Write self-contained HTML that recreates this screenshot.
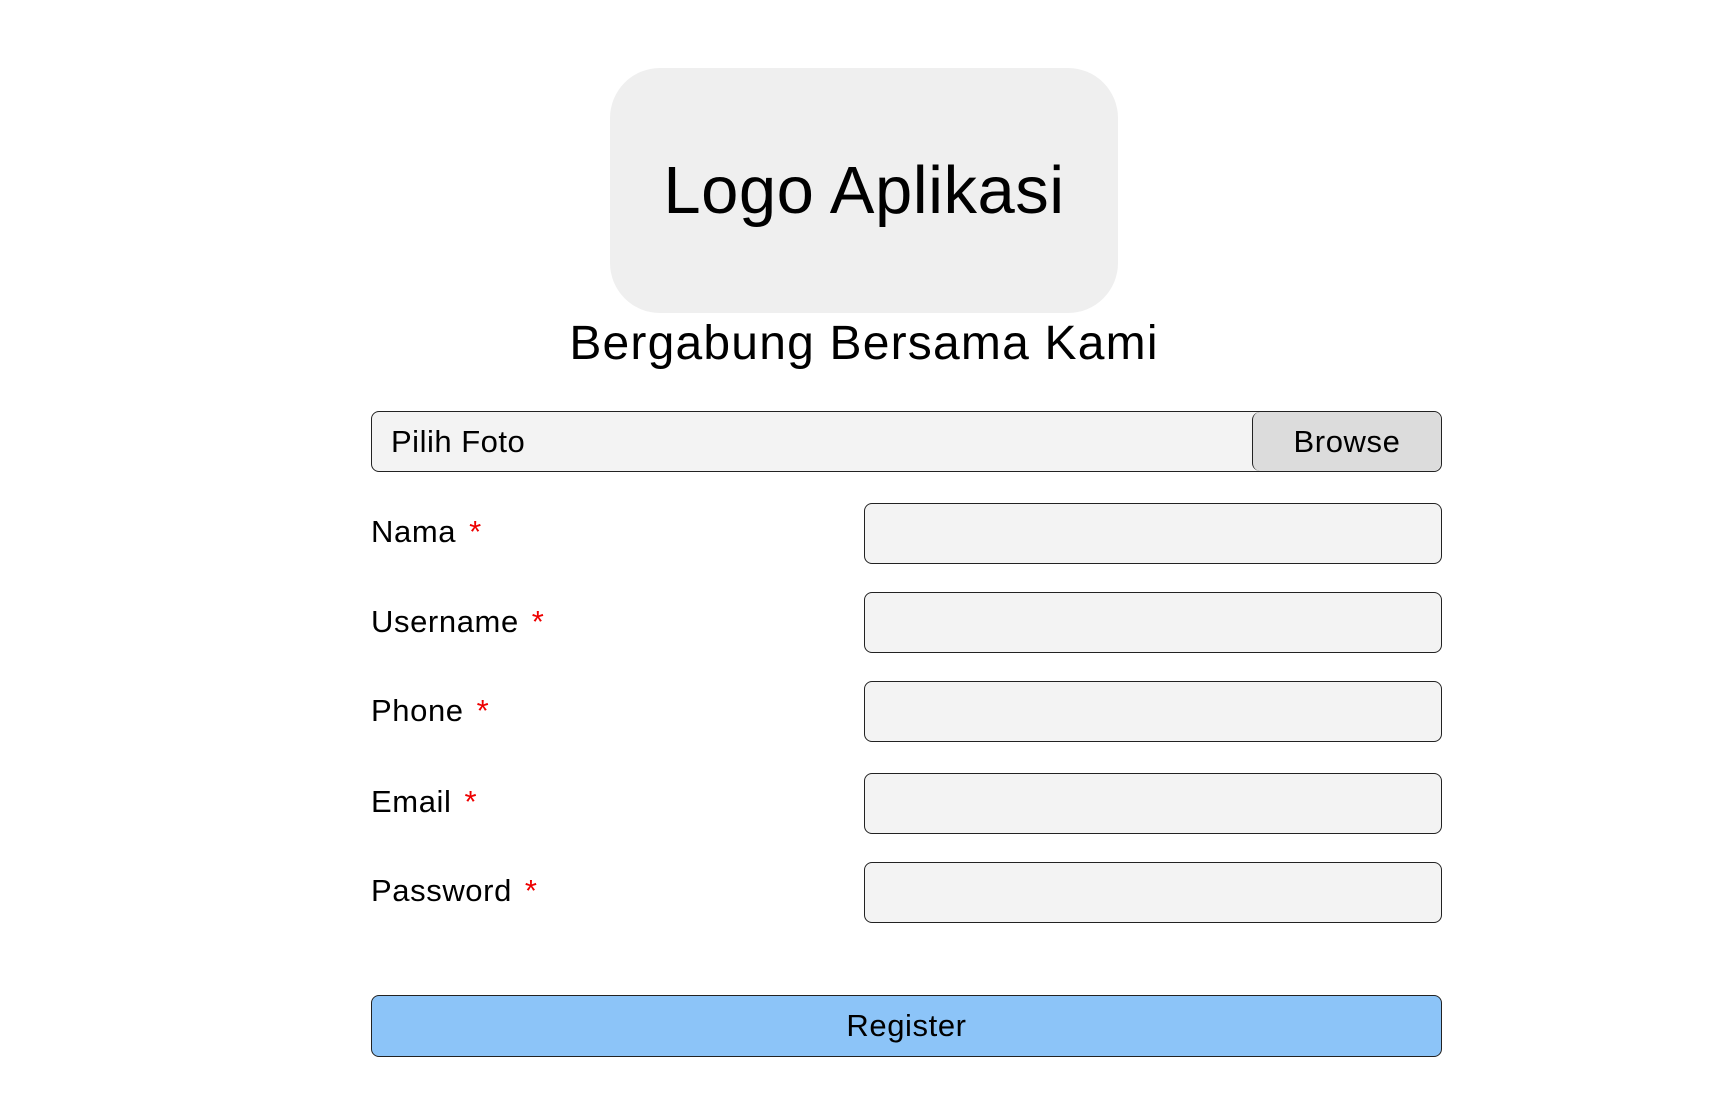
<!DOCTYPE html>
<html><head><style>
body{margin:0;width:1728px;height:1117px;background:#fff;font-family:"Liberation Sans",sans-serif;color:#000;position:relative;overflow:hidden}
.a{position:absolute}
.logo{left:610px;top:68px;width:508px;height:245px;background:#efefef;border-radius:50px;display:flex;align-items:center;justify-content:center;font-size:67px;letter-spacing:0.5px}
.title{left:0;width:1728px;top:314px;text-align:center;font-size:48px;line-height:60px;letter-spacing:1.2px}
.file{left:371px;top:411px;width:1069px;height:59px;background:#f3f3f3;border:1px solid #222;border-radius:8px;overflow:hidden}
.file span{position:absolute;left:19px;top:0;line-height:59px;font-size:31px;letter-spacing:0.5px}
.browse{position:absolute;right:0;top:0;width:188px;height:59px;background:#dcdcdc;border-left:1px solid #222;border-radius:8px;text-align:center;line-height:59px;font-size:31px;letter-spacing:0.6px}
.inp{left:864px;width:576px;height:59px;background:#f3f3f3;border:1px solid #222;border-radius:8px}
.lab{left:371px;font-size:31px;line-height:40px;letter-spacing:0.6px}
.lab b{color:#e00;font-weight:normal;margin-left:13px}
.reg{left:371px;top:995px;width:1069px;height:60px;background:#8cc4f8;border:1px solid #222;border-radius:8px;text-align:center;line-height:60px;font-size:31px;letter-spacing:0.6px}
</style></head><body>
<div class="a logo">Logo Aplikasi</div>
<div class="a title">Bergabung Bersama Kami</div>
<div class="a file"><span>Pilih Foto</span><div class="browse">Browse</div></div>
<div class="a lab" style="top:512px">Nama<b>*</b></div>
<div class="a inp" style="top:503px"></div>
<div class="a lab" style="top:602px">Username<b>*</b></div>
<div class="a inp" style="top:592px"></div>
<div class="a lab" style="top:691px">Phone<b>*</b></div>
<div class="a inp" style="top:681px"></div>
<div class="a lab" style="top:782px">Email<b>*</b></div>
<div class="a inp" style="top:773px"></div>
<div class="a lab" style="top:871px">Password<b>*</b></div>
<div class="a inp" style="top:862px"></div>
<div class="a reg">Register</div>
</body></html>
